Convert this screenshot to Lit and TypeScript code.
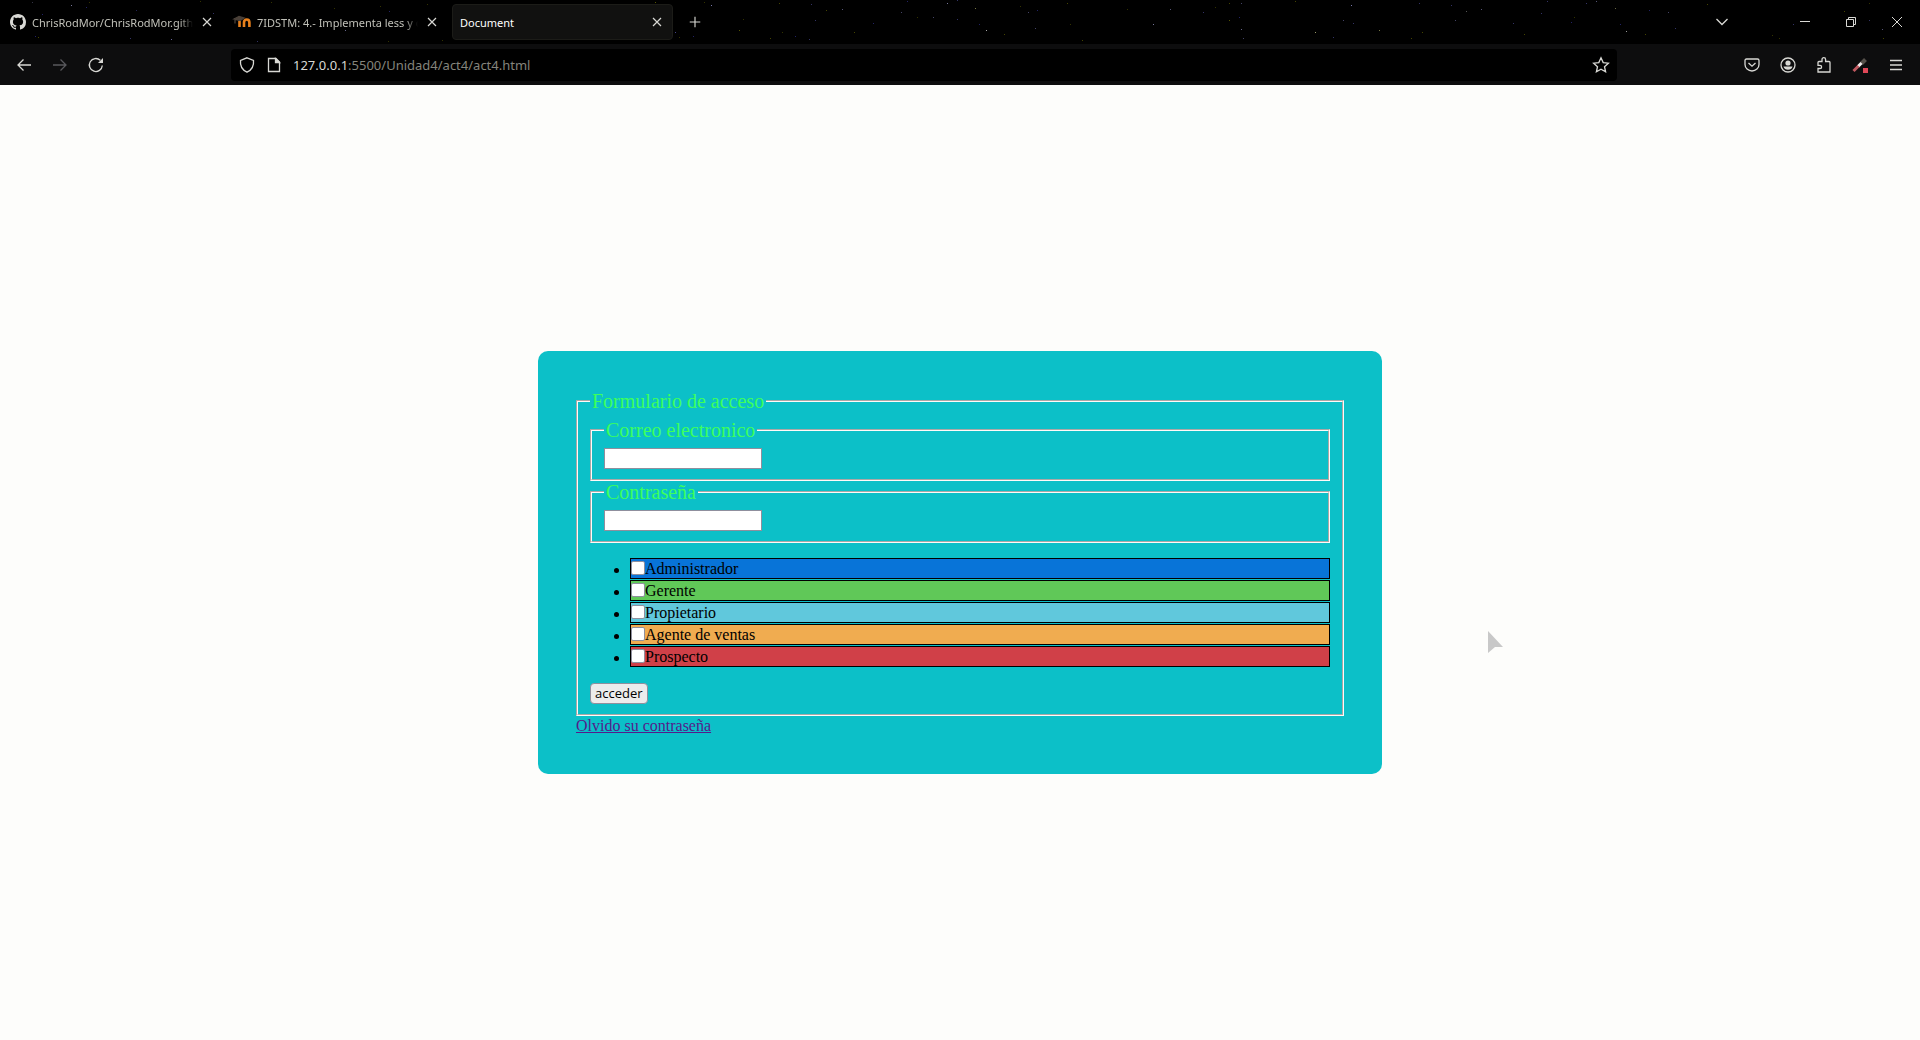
import { LitElement, html, css, svg } from "lit";
import { customElement } from "lit/decorators.js";

const stars: [number, number, string][] = [
  [32, 2, "#334"], [71, 5, "#777799"], [89, 2, "#333300"], [86, 7, "#222266"], [42, 14, "#222266"],
  [38, 37, "#444400"], [35, 36, "#222266"], [130, 38, "#333366"], [171, 39, "#666699"], [136, 10, "#222255"],
  [200, 1, "#333300"], [213, 13, "#333366"], [257, 41, "#333366"], [271, 2, "#333300"], [334, 8, "#333300"],
  [345, 30, "#666688"], [380, 6, "#333300"], [389, 11, "#222266"], [427, 4, "#333300"], [388, 41, "#333300"],
  [442, 40, "#333300"], [655, 2, "#555500"], [711, 5, "#7777aa"], [675, 32, "#444488"], [679, 37, "#333300"],
  [704, 2, "#333300"], [693, 36, "#222266"], [743, 19, "#333300"], [739, 30, "#555500"], [779, 3, "#444400"],
  [811, 4, "#333366"], [826, 10, "#444400"], [842, 9, "#555577"], [815, 20, "#333366"], [782, 32, "#333300"],
  [770, 38, "#444400"], [795, 36, "#222266"], [809, 39, "#333366"], [854, 32, "#444400"], [873, 23, "#222266"],
  [901, 12, "#444466"], [907, 1, "#222266"], [917, 17, "#333300"], [933, 17, "#444466"], [947, 3, "#777799"],
  [957, 0, "#333366"], [957, 19, "#333366"], [975, 8, "#777744"], [979, 24, "#222266"], [986, 30, "#aaaaaa"],
  [1004, 34, "#444400"], [1020, 6, "#333300"], [1028, 12, "#444466"], [1035, 28, "#444466"], [1037, 10, "#222266"],
  [1067, 3, "#444400"], [1070, 24, "#333300"], [1082, 40, "#444400"], [1127, 9, "#333300"], [1153, 24, "#777799"],
  [1170, 9, "#555577"], [1203, 12, "#333366"], [1215, 7, "#333300"], [1229, 3, "#444400"], [1241, 3, "#444466"],
  [1229, 20, "#555500"], [1239, 17, "#222266"], [1241, 29, "#666688"], [1243, 38, "#444466"], [1295, 1, "#444400"],
  [1315, 32, "#999966"], [1333, 37, "#333366"], [1343, 20, "#444466"], [1351, 5, "#7777aa"], [1353, 23, "#333366"],
  [1379, 30, "#777744"], [1411, 38, "#444400"], [1419, 3, "#333366"], [1422, 32, "#444400"], [1451, 5, "#333366"],
  [1455, 20, "#444466"], [1466, 11, "#555555"], [1481, 9, "#555577"], [1513, 23, "#333366"], [1524, 34, "#444400"],
  [1541, 13, "#333366"], [1547, 1, "#333366"], [1586, 3, "#333366"], [1596, 1, "#555577"], [1615, 8, "#666644"],
  [1574, 17, "#333300"], [1571, 22, "#222266"], [1626, 31, "#999999"], [1620, 24, "#222266"], [1645, 34, "#444400"],
  [1649, 10, "#222266"], [1668, 12, "#444466"], [1675, 28, "#333366"], [1707, 4, "#444400"], [1772, 35, "#333300"],
  [1793, 24, "#333366"], [1779, 38, "#333300"], [1844, 11, "#444400"], [1869, 20, "#333366"], [1869, 3, "#333300"],
  [1882, 29, "#555577"], [1883, 38, "#444400"],
];

const icons = {
  github: svg`<path fill="currentColor" stroke="none" d="M8 0C3.58 0 0 3.58 0 8c0 3.54 2.29 6.53 5.47 7.59.4.07.55-.17.55-.38 0-.19-.01-.82-.01-1.49-2.01.37-2.53-.49-2.69-.94-.09-.23-.48-.94-.82-1.13-.28-.15-.68-.52-.01-.53.63-.01 1.08.58 1.23.82.72 1.21 1.87.87 2.33.66.07-.52.28-.87.51-1.07-1.78-.2-3.64-.89-3.64-3.95 0-.87.31-1.59.82-2.15-.08-.2-.36-1.02.08-2.12 0 0 .67-.21 2.2.82.64-.18 1.32-.27 2-.27s1.36.09 2 .27c1.53-1.04 2.2-.82 2.2-.82.44 1.1.16 1.92.08 2.12.51.56.82 1.27.82 2.15 0 3.07-1.87 3.75-3.65 3.95.29.25.54.73.54 1.48 0 1.07-.01 1.93-.01 2.2 0 .21.15.46.55.38A8.01 8.01 0 0 0 16 8c0-4.42-3.58-8-8-8z"/>`,
  moodle: svg`<path d="M4.500 7v6M9 13V8.500q0-3 2.700-3t2.700 3V13" stroke="#e8801c" stroke-width="2.600"/><path d="M-1 5l5-2.500 5 1.500-4 2.500zM0 5.500v4" stroke="#4a4038" fill="#4a4038"/>`,
  close: svg`<path d="M4 4l8 8M12 4l-8 8" stroke-width="1.200"/>`,
  plus: svg`<path d="M8 2v12M2 8h12"/>`,
  chevron: svg`<path d="M2.500 5l5.500 5.500L13.500 5"/>`,
  minimize: svg`<path d="M3 7.500h10" stroke-width="1"/>`,
  restore: svg`<path d="M3.500 5.500h7v7h-7zM5.500 5V3.500h7v7H11" stroke-width="1"/>`,
  winClose: svg`<path d="M3 3l10 10M13 3L3 13" stroke-width="1"/>`,
  back: svg`<path d="M15 8H2M7.500 2.500L2 8l5.500 5.500"/>`,
  forward: svg`<path d="M1 8h13M8.500 2.500L14 8l-5.500 5.500"/>`,
  reload: svg`<path d="M14.300 8.500A6.500 6.500 0 1 1 12.300 3.300"/><path d="M15 1v5h-5z" fill="currentColor" stroke="none"/>`,
  shield: svg`<path d="M8 .8l6.500 2.700c.5 4.500-1 9-6.500 11.700C2.500 12.500 1 8 1.500 3.500z"/>`,
  page: svg`<path d="M2.500 1.500h7.500L13.500 5v9.500h-11z"/><path d="M9.500 1.500v4h4z" fill="currentColor"/>`,
  star: svg`<path d="M8 .8l2.200 4.800 5.200.6-3.900 3.500 1.100 5.100L8 12.300l-4.600 2.500 1.100-5.100L.6 6.200l5.200-.6z"/>`,
  pocket: svg`<path d="M2.500 2h11q1.500 0 1.500 1.500v4a7 6.500 0 0 1-14 0v-4Q1 2 2.500 2z"/><path d="M4.500 6L8 9.200 11.500 6"/>`,
  account: svg`<circle cx="8" cy="8" r="7"/><circle cx="8" cy="6" r="2.600" fill="currentColor" stroke="none"/><path d="M3.500 9.500h9Q11.500 12.800 8 12.800T3.500 9.500z" fill="currentColor" stroke="none"/>`,
  puzzle: svg`<path d="M2 5.500Q2 4.500 3 4.500h3V2.500a1.800 1.800 0 0 1 3.600 0v2H13q1 0 1 1V15H2v-3.500h2a1.600 1.600 0 0 0 0-3.200H2z"/>`,
  picker: svg`<path d="M9.500 6.500L13.500 2.500" stroke="#55504a" stroke-width="4"/><path d="M6 9.500L9.500 6" stroke="#f4eeee" stroke-width="3"/><path d="M1.500 14L6.500 9" stroke="#c05860" stroke-width="3"/><path d="M11 11h5v5h-5z" fill="#e04858" stroke="none"/>`,
  menu: svg`<path d="M2 3.500h12M2 8h12M2 12.500h12"/>`,
};

const icon = (name: keyof typeof icons) =>
  html`<svg class="icon" viewBox="0 0 16 16" aria-hidden="true">${icons[name]}</svg>`;

@customElement("app-root")
export class AppRoot extends LitElement {
  static styles = css`
    :host {
      display: flex;
      flex-direction: column;
      min-height: 100vh;
      background: #fdfdfb;
      font-family: "Liberation Serif", "Times New Roman", serif;
      font-size: 16px;
      color: #000;
    }
    * { box-sizing: border-box; }
    button { font: inherit; color: inherit; cursor: pointer; }
    .icon {
      display: block;
      flex: none;
      width: 16px;
      height: 16px;
      fill: none;
      stroke: currentColor;
      stroke-width: 1.3;
      overflow: visible;
    }
    .plain {
      display: grid;
      place-items: center;
      padding: 0;
      border: 0;
      background: none;
      flex: none;
    }
    .chrome {
      background: #000;
      color: #d8d8d4;
      font-family: "Noto Sans", "Open Sans", sans-serif;
    }
    .tabs {
      position: relative;
      display: flex;
      align-items: center;
      height: 44px;
      font-size: 11px;
    }
    .sky {
      position: absolute;
      inset: 0;
      width: 100%;
      height: 100%;
      pointer-events: none;
    }
    .tab {
      display: flex;
      align-items: center;
      gap: 6px;
      width: 225px;
      height: 36px;
      padding: 0 10px;
    }
    .tab .name {
      flex: 1;
      min-width: 0;
      white-space: nowrap;
      color: #c0c0b8;
      mask-image: linear-gradient(to right, #000 92%, transparent);
    }
    .tab.active {
      width: 221px;
      margin-left: 2px;
      padding: 0 7px;
      border-radius: 4px;
      background: #111110;
      border: 1px solid #1c1c18;
    }
    .tab.active .name { color: #fff; mask-image: none; }
    .add { width: 44px; height: 36px; }
    .add .icon { width: 14px; height: 14px; }
    .list { width: 40px; height: 36px; margin: 0 40px 0 auto; }
    .window { width: 46px; height: 36px; }
    .nav {
      display: flex;
      align-items: center;
      height: 41px;
      padding: 0 6px;
      background: #0d0d0e;
    }
    .nav > .plain { width: 36px; height: 32px; }
    .nav > .plain:disabled { color: #58585c; }
    .url {
      display: flex;
      align-items: center;
      gap: 11px;
      flex: 1;
      height: 32px;
      margin: 0 117px;
      padding: 0 8px;
      border-radius: 4px;
      background: #000;
      font-size: 13px;
    }
    .address { flex: 1; color: #84847c; }
    .host { color: #d8d8d4; }
    main {
      display: flex;
      flex: 1;
      align-items: center;
      justify-content: center;
      position: relative;
    }
    .card {
      width: 44%;
      padding: 2%;
      border-radius: 10px;
      background: #0cc0c8;
    }
    fieldset {
      min-width: 0;
      margin: 0;
      padding: 6px 12px 10px;
      border: 2px groove #fffaf8;
    }
    legend {
      padding: 0 2px;
      font-size: 20px;
      line-height: 23px;
      color: #3cff5c;
    }
    .text {
      display: block;
      width: 158px;
      height: 21px;
      padding: 1px 2px;
      border: 1px solid #8f8f9d;
      background: #fff;
      font: 13px "Open Sans", sans-serif;
    }
    .roles {
      display: grid;
      gap: 1px;
      margin: 15px 0 16px;
      padding-left: 40px;
    }
    .role {
      height: 21px;
      border: 1px solid #000;
      line-height: 19px;
    }
    .role label { display: flex; align-items: center; width: fit-content; height: 19px; }
    .role input {
      appearance: none;
      width: 14px;
      height: 14px;
      margin: 0;
      border: 1px solid #8f8f9d;
      border-radius: 2px;
      background: #fff;
    }
    .admin { background: #0874d8; }
    .manager { background: #60c858; }
    .owner { background: #60c8dc; }
    .agent { background: #f0ac50; }
    .prospect { background: #d04048; }
    .submit {
      display: block;
      height: 21px;
      padding: 0 4px;
      border: 1px solid #8f8f9d;
      border-radius: 4px;
      background: #ececec;
      color: #000;
      font: 13px/18px "Open Sans", "Noto Sans", sans-serif;
    }
    .forgot { display: block; width: fit-content; line-height: 20px; color: #551a8b; }
    .pointer {
      position: absolute;
      left: 1488px;
      top: 546px;
      width: 16px;
      height: 22px;
    }
  `;

  private roles = [
    ["admin", "Administrador"],
    ["manager", "Gerente"],
    ["owner", "Propietario"],
    ["agent", "Agente de ventas"],
    ["prospect", "Prospecto"],
  ];

  render() {
    return html`
      <header class="chrome">
        <div class="tabs">
          <svg class="sky" aria-hidden="true">
            ${stars.map(([x, y, c]) => svg`<rect x=${x} y=${y} width="1" height="1" fill=${c} />`)}
          </svg>
          <div class="tab">
            ${icon("github")}<span class="name">ChrisRodMor/ChrisRodMor.gith</span>
            <button class="plain" aria-label="Cerrar">${icon("close")}</button>
          </div>
          <div class="tab">
            ${icon("moodle")}<span class="name">7IDSTM: 4.- Implementa less y c</span>
            <button class="plain" aria-label="Cerrar">${icon("close")}</button>
          </div>
          <div class="tab active">
            <span class="name">Document</span>
            <button class="plain" aria-label="Cerrar">${icon("close")}</button>
          </div>
          <button class="plain add" aria-label="Nueva">${icon("plus")}</button>
          <button class="plain list" aria-label="Lista">${icon("chevron")}</button>
          <button class="plain window" aria-label="Minimizar">${icon("minimize")}</button>
          <button class="plain window" aria-label="Restaurar">${icon("restore")}</button>
          <button class="plain window" aria-label="Cerrar">${icon("winClose")}</button>
        </div>
        <nav class="nav">
          <button class="plain" aria-label="Atrás">${icon("back")}</button>
          <button class="plain" aria-label="Adelante" disabled>${icon("forward")}</button>
          <button class="plain" aria-label="Recargar">${icon("reload")}</button>
          <div class="url">
            ${icon("shield")}${icon("page")}
            <span class="address"><span class="host">127.0.0.1</span>:5500/Unidad4/act4/act4.html</span>
            <button class="plain" aria-label="Marcador">${icon("star")}</button>
          </div>
          <button class="plain" aria-label="Pocket">${icon("pocket")}</button>
          <button class="plain" aria-label="Cuenta">${icon("account")}</button>
          <button class="plain" aria-label="Extensiones">${icon("puzzle")}</button>
          <button class="plain" aria-label="Selector de color">${icon("picker")}</button>
          <button class="plain" aria-label="Menú">${icon("menu")}</button>
        </nav>
      </header>
      <main>
        <form class="card" @submit=${(e: Event) => e.preventDefault()}>
          <fieldset>
            <legend>Formulario de acceso</legend>
            <fieldset>
              <legend><label for="email">Correo electronico</label></legend>
              <input class="text" id="email" type="email" />
            </fieldset>
            <fieldset>
              <legend><label for="password">Contraseña</label></legend>
              <input class="text" id="password" type="password" />
            </fieldset>
            <ul class="roles">
              ${this.roles.map(
                ([kind, name]) => html`<li class="role ${kind}"><label><input type="checkbox" />${name}</label></li>`
              )}
            </ul>
            <button class="submit">acceder</button>
          </fieldset>
          <a class="forgot" href="#">Olvido su contraseña</a>
        </form>
        <svg class="pointer" viewBox="0 0 16 22" aria-hidden="true">
          <path d="M0 0l15 16H7l-7 6z" fill="#c8c8c8" />
        </svg>
      </main>
    `;
  }
}
